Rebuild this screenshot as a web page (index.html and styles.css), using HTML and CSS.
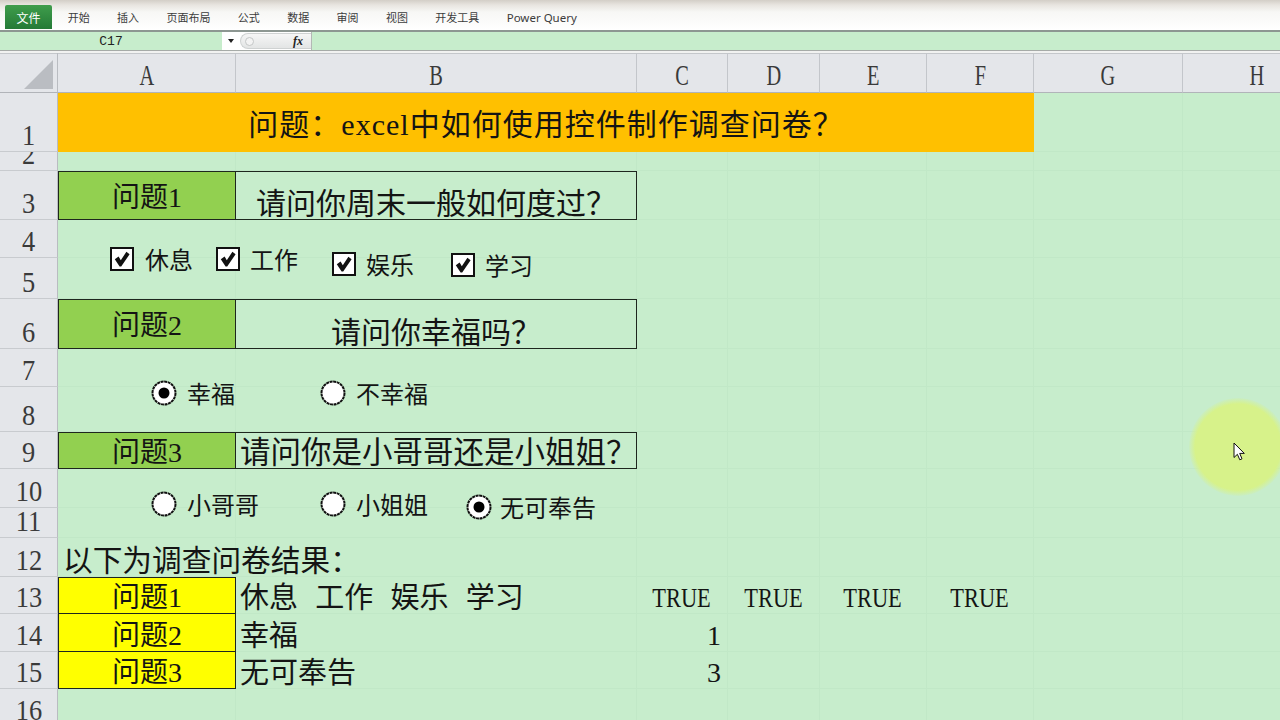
FILE: index.html
```html
<!DOCTYPE html>
<html lang="zh-CN">
<head>
<meta charset="utf-8">
<title>Excel 调查问卷</title>
<link rel="stylesheet" href="styles.css">
</head>
<body>
<div class="app">
  <div class="ribbon">
    <div class="file">文件</div>
    <div class="tab">开始</div>
    <div class="tab">插入</div>
    <div class="tab">页面布局</div>
    <div class="tab">公式</div>
    <div class="tab">数据</div>
    <div class="tab">审阅</div>
    <div class="tab">视图</div>
    <div class="tab">开发工具</div>
    <div class="tab latin">Power Query</div>
  </div>
  <div class="fbar">
    <div class="namebox">C17</div>
    <div class="fxarea">
      <span class="drop"></span>
      <div class="pill"><span class="knob"></span><span class="fx">fx</span></div>
    </div>
    <div class="formula"></div>
  </div>
  <div class="split"></div>

  <div class="sheet">
    <div class="corner"><svg width="58" height="39" viewBox="0 0 58 39"><polygon points="53,7 53,36 24,36" fill="#babdc2"/></svg></div>
    <div class="ch"><span>A</span></div>
    <div class="ch"><span>B</span></div>
    <div class="ch"><span>C</span></div>
    <div class="ch"><span>D</span></div>
    <div class="ch"><span>E</span></div>
    <div class="ch"><span>F</span></div>
    <div class="ch"><span>G</span></div>
    <div class="ch"><span>H</span></div>

    <div class="rh"><span>1</span></div>
    <div class="c title">问题：excel中如何使用控件制作调查问卷？</div>
    <div class="c"></div><div class="c"></div>

    <div class="rh"><span>2</span></div>
    <div class="c"></div><div class="c"></div><div class="c"></div><div class="c"></div><div class="c"></div><div class="c"></div><div class="c"></div><div class="c"></div>

    <div class="rh"><span>3</span></div>
    <div class="c q">问题1</div>
    <div class="c qt">请问你周末一般如何度过？</div>
    <div class="c"></div><div class="c"></div><div class="c"></div><div class="c"></div><div class="c"></div><div class="c"></div>

    <div class="rh"><span>4</span></div>
    <div class="c"></div><div class="c"></div><div class="c"></div><div class="c"></div><div class="c"></div><div class="c"></div><div class="c"></div><div class="c"></div>

    <div class="rh"><span>5</span></div>
    <div class="c"></div><div class="c"></div><div class="c"></div><div class="c"></div><div class="c"></div><div class="c"></div><div class="c"></div><div class="c"></div>

    <div class="rh"><span>6</span></div>
    <div class="c q">问题2</div>
    <div class="c qt">请问你幸福吗？</div>
    <div class="c"></div><div class="c"></div><div class="c"></div><div class="c"></div><div class="c"></div><div class="c"></div>

    <div class="rh"><span>7</span></div>
    <div class="c"></div><div class="c"></div><div class="c"></div><div class="c"></div><div class="c"></div><div class="c"></div><div class="c"></div><div class="c"></div>

    <div class="rh"><span>8</span></div>
    <div class="c"></div><div class="c"></div><div class="c"></div><div class="c"></div><div class="c"></div><div class="c"></div><div class="c"></div><div class="c"></div>

    <div class="rh"><span>9</span></div>
    <div class="c q">问题3</div>
    <div class="c qt left">请问你是小哥哥还是小姐姐？</div>
    <div class="c"></div><div class="c"></div><div class="c"></div><div class="c"></div><div class="c"></div><div class="c"></div>

    <div class="rh"><span>10</span></div>
    <div class="c"></div><div class="c"></div><div class="c"></div><div class="c"></div><div class="c"></div><div class="c"></div><div class="c"></div><div class="c"></div>

    <div class="rh"><span>11</span></div>
    <div class="c"></div><div class="c"></div><div class="c"></div><div class="c"></div><div class="c"></div><div class="c"></div><div class="c"></div><div class="c"></div>

    <div class="rh"><span>12</span></div>
    <div class="c spill">以下为调查问卷结果：</div>
    <div class="c"></div><div class="c"></div><div class="c"></div><div class="c"></div><div class="c"></div><div class="c"></div><div class="c"></div>

    <div class="rh"><span>13</span></div>
    <div class="c y">问题1</div>
    <div class="c words">休息 工作 娱乐 学习</div>
    <div class="c tc"><span>TRUE</span></div>
    <div class="c tc"><span>TRUE</span></div>
    <div class="c tc"><span>TRUE</span></div>
    <div class="c tc"><span>TRUE</span></div>
    <div class="c"></div><div class="c"></div>

    <div class="rh"><span>14</span></div>
    <div class="c y nt">问题2</div>
    <div class="c">幸福</div>
    <div class="c num">1</div>
    <div class="c"></div><div class="c"></div><div class="c"></div><div class="c"></div><div class="c"></div>

    <div class="rh"><span>15</span></div>
    <div class="c y nt">问题3</div>
    <div class="c">无可奉告</div>
    <div class="c num">3</div>
    <div class="c"></div><div class="c"></div><div class="c"></div><div class="c"></div><div class="c"></div>

    <div class="rh"><span>16</span></div>
    <div class="c"></div><div class="c"></div><div class="c"></div><div class="c"></div><div class="c"></div><div class="c"></div><div class="c"></div><div class="c"></div>

    <!-- floating form controls -->
    <div class="ctl cb1"><svg class="box" width="24" height="24" viewBox="0 0 24 24"><rect x="1" y="1" width="22" height="22" fill="#fff" stroke="#111" stroke-width="2"/><path d="M4.8 12.2 L8.6 9.6 L10.8 13.2 L16.4 4.8 L19.6 7.2 L11.2 19.4 L9.6 19.4 Z" fill="#111"/></svg><span>休息</span></div>
    <div class="ctl cb2"><svg class="box" width="24" height="24" viewBox="0 0 24 24"><rect x="1" y="1" width="22" height="22" fill="#fff" stroke="#111" stroke-width="2"/><path d="M4.8 12.2 L8.6 9.6 L10.8 13.2 L16.4 4.8 L19.6 7.2 L11.2 19.4 L9.6 19.4 Z" fill="#111"/></svg><span>工作</span></div>
    <div class="ctl cb3"><svg class="box" width="24" height="24" viewBox="0 0 24 24"><rect x="1" y="1" width="22" height="22" fill="#fff" stroke="#111" stroke-width="2"/><path d="M4.8 12.2 L8.6 9.6 L10.8 13.2 L16.4 4.8 L19.6 7.2 L11.2 19.4 L9.6 19.4 Z" fill="#111"/></svg><span>娱乐</span></div>
    <div class="ctl cb4"><svg class="box" width="24" height="24" viewBox="0 0 24 24"><rect x="1" y="1" width="22" height="22" fill="#fff" stroke="#111" stroke-width="2"/><path d="M4.8 12.2 L8.6 9.6 L10.8 13.2 L16.4 4.8 L19.6 7.2 L11.2 19.4 L9.6 19.4 Z" fill="#111"/></svg><span>学习</span></div>

    <div class="ctl rd1"><svg width="26" height="26" viewBox="0 0 26 26"><circle cx="13" cy="13" r="11.5" fill="#fff" stroke="#111" stroke-width="2" stroke-dasharray="3 0.6"/><circle cx="13" cy="13" r="5.5" fill="#000"/></svg><span>幸福</span></div>
    <div class="ctl rd2"><svg width="26" height="26" viewBox="0 0 26 26"><circle cx="13" cy="13" r="11.5" fill="#fff" stroke="#111" stroke-width="2" stroke-dasharray="3 0.6"/></svg><span>不幸福</span></div>
    <div class="ctl rd3"><svg width="26" height="26" viewBox="0 0 26 26"><circle cx="13" cy="13" r="11.5" fill="#fff" stroke="#111" stroke-width="2" stroke-dasharray="3 0.6"/></svg><span>小哥哥</span></div>
    <div class="ctl rd4"><svg width="26" height="26" viewBox="0 0 26 26"><circle cx="13" cy="13" r="11.5" fill="#fff" stroke="#111" stroke-width="2" stroke-dasharray="3 0.6"/></svg><span>小姐姐</span></div>
    <div class="ctl rd5"><svg width="26" height="26" viewBox="0 0 26 26"><circle cx="13" cy="13" r="11.5" fill="#fff" stroke="#111" stroke-width="2" stroke-dasharray="3 0.6"/><circle cx="13" cy="13" r="5.5" fill="#000"/></svg><span>无可奉告</span></div>

    <div class="spot"></div>
    <svg class="cursor" width="13" height="19" viewBox="0 0 13 19"><path d="M1 1 L1 15.5 L4.4 12.3 L6.8 17.8 L9 16.8 L6.7 11.4 L11.3 11.4 Z" fill="#fff" stroke="#111" stroke-width="1" stroke-linejoin="round"/></svg>
  </div>
</div>
</body>
</html>
```

FILE: styles.css
```css
* { box-sizing: border-box; margin: 0; padding: 0; }

:root {
  --sheet: #c7edcc;
  --grid: #c1e8c7;
  --hdr: #e4e6ea;
  --line: #1e261e;
}

body {
  margin: 0;
  width: 1280px;
  height: 720px;
  overflow: hidden;
  background: var(--sheet);
  font-family: "Liberation Serif", "Noto Sans CJK SC", serif;
}

.app {
  width: 1280px;
  height: 720px;
  overflow: hidden;
}

/* ---------- ribbon tabs ---------- */
.ribbon {
  height: 30px;
  display: flex;
  align-items: flex-end;
  padding-left: 5px;
  background: linear-gradient(180deg, #d3cec7 0, #e8e5e0 5px, #f7f7f5 12px, #ffffff 30px);
}

.file {
  width: 47px;
  height: 24px;
  margin: 0 2px 1px 0;
  border-radius: 2px 2px 0 0;
  background: linear-gradient(180deg, #3f9d4c, #247a36);
  color: #fff;
  font: 12px "Noto Sans CJK SC", sans-serif;
  display: flex;
  align-items: center;
  justify-content: center;
}

.tab {
  height: 24px;
  margin-bottom: 1px;
  padding: 0 13.7px;
  display: flex;
  align-items: center;
  font: 11px "Noto Sans CJK SC", sans-serif;
  color: #3c3c3c;
}

.tab.latin { font-family: "Noto Sans", sans-serif; font-size: 11.5px; }

/* ---------- formula bar ---------- */
.fbar {
  height: 20px;
  display: flex;
  border-top: 2px solid #8d9792;
  background: var(--sheet);
}

.namebox {
  width: 222px;
  display: flex;
  align-items: center;
  justify-content: center;
  font: 13px "Liberation Mono", monospace;
  color: #222;
}

.fxarea {
  width: 90px;
  display: flex;
  align-items: center;
  background: #fff;
  border-right: 1px solid #b3b8b5;
}

.drop {
  width: 0;
  height: 0;
  margin-left: 6px;
  border-left: 3px solid transparent;
  border-right: 3px solid transparent;
  border-top: 4px solid #222;
}

.pill {
  margin-left: 6px;
  flex: 1;
  height: 16px;
  display: flex;
  align-items: center;
  justify-content: space-between;
  padding: 0 8px 0 4px;
  border: 1px solid #cfd2d2;
  border-right: 0;
  border-radius: 8px 0 0 8px;
  background: linear-gradient(180deg, #f6f6f6, #e3e5e5);
}

.knob {
  width: 9px;
  height: 9px;
  border-radius: 50%;
  border: 1px solid #c4c7c7;
  background: #f3f3f3;
}

.fx {
  font: italic bold 12px "Liberation Serif", serif;
  color: #222;
}

.formula { flex: 1; }

.split {
  height: 3px;
  border-top: 1px solid #a6aba8;
  background: #f1f2f1;
}

/* ---------- sheet grid ---------- */
.sheet {
  position: relative;
  width: 1331px;
  display: grid;
  grid-template-columns: 58px 178px 401px 91px 92px 107px 107px 149px 148px;
  grid-template-rows: 40px 59px 19px 49px 38px 41px 50px 38px 45px 37px 39px 30px 39px 37px 38px 37px 38px;
}

.corner {
  background: var(--hdr);
  border-right: 1px solid #b9bcc1;
  border-bottom: 1px solid #b1b4b9;
  box-shadow: inset 0 1px #c4c7cb;
}

.corner svg { display: block; }

.ch {
  background: var(--hdr);
  border-right: 1px solid #c3c6cb;
  border-bottom: 1px solid #b1b4b9;
  box-shadow: inset 0 1px #c4c7cb;
  display: flex;
  align-items: center;
  justify-content: center;
  padding-top: 4px;
  font: 30px/30px "Liberation Serif", serif;
  color: #3a3a3a;
}

.ch span { display: inline-block; transform: scaleX(0.68); }

.rh {
  background: var(--hdr);
  border-right: 1px solid #b9bcc1;
  border-bottom: 1px solid #c8cbcf;
  display: flex;
  align-items: flex-end;
  justify-content: center;
  overflow: hidden;
  padding-bottom: 1px;
  font: 30px/30px "Liberation Serif", serif;
  color: #3a3a3a;
}

.rh span { display: inline-block; transform: scaleX(0.88); }

.c {
  border-right: 1px solid var(--grid);
  border-bottom: 1px solid var(--grid);
  display: flex;
  align-items: flex-end;
  padding: 0 4px;
  white-space: nowrap;
  font-size: 29px;
  line-height: 30px;
  color: #141414;
}

.title {
  grid-column: span 6;
  border: 0;
  background: #ffc000;
  justify-content: center;
  padding-bottom: 12px;
  font-size: 30px;
  letter-spacing: 1px;
}

.q {
  background: #92d050;
  border: 1px solid var(--line);
  justify-content: center;
  align-items: center;
  padding-top: 4px;
  font-size: 28px;
}

.qt {
  border: 1px solid var(--line);
  border-left: 0;
  justify-content: center;
  font-size: 30px;
}

.qt.left { justify-content: flex-start; font-size: 30.5px; }

.spill { padding-left: 5px; font-size: 29.7px; }

.y {
  background: #ffff00;
  border: 1px solid var(--line);
  justify-content: center;
  font-size: 28px;
}

.y.nt { border-top: 0; }

.words { word-spacing: 10px; }

.tc {
  justify-content: center;
  font-size: 28px;
}

.tc span { display: inline-block; transform: scaleX(0.8); }

.num {
  justify-content: flex-end;
  padding-right: 6px;
  font-size: 28px;
}

/* ---------- floating form controls ---------- */
.ctl {
  position: absolute;
  display: flex;
  align-items: center;
  gap: 10px;
  font: 24px/26px "Noto Sans CJK SC", sans-serif;
  color: #141414;
  white-space: nowrap;
}

.ctl svg { display: block; flex: none; }

.cb1 { left: 110px; top: 193px; gap: 11px; }
.cb2 { left: 216px; top: 193px; }
.cb3 { left: 332px; top: 198px; }
.cb4 { left: 451px; top: 199px; }

.rd1 { left: 151px; top: 327px; }
.rd2 { left: 320px; top: 327px; }
.rd3 { left: 151px; top: 438px; }
.rd4 { left: 320px; top: 438px; }
.rd5 { left: 466px; top: 441px; gap: 8px; }

/* ---------- screen-recording cursor highlight ---------- */
.spot {
  position: absolute;
  left: 1189px;
  top: 345px;
  width: 98px;
  height: 98px;
  border-radius: 50%;
  background: radial-gradient(circle, #d7f28a 0, #d7f28a 62%, rgba(215, 242, 138, 0) 72%);
}

.cursor {
  position: absolute;
  left: 1233px;
  top: 389px;
}
```
